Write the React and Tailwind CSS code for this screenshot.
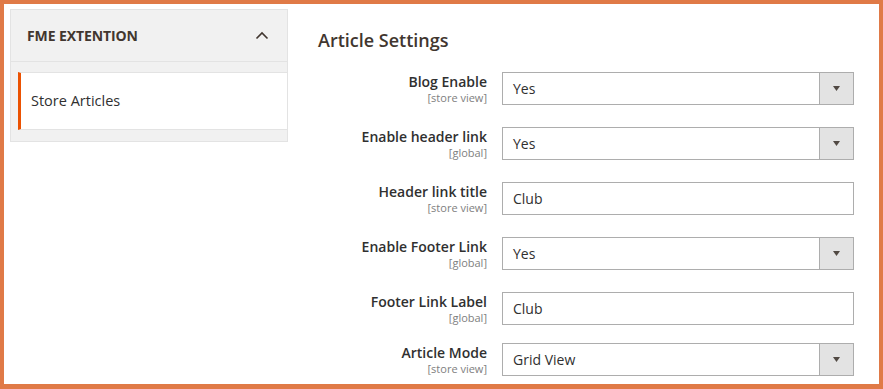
import React from 'react';

const rows = [
  { label: 'Blog Enable', scope: '[store view]', value: 'Yes', select: true },
  { label: 'Enable header link', scope: '[global]', value: 'Yes', select: true },
  { label: 'Header link title', scope: '[store view]', value: 'Club', select: false },
  { label: 'Enable Footer Link', scope: '[global]', value: 'Yes', select: true },
  { label: 'Footer Link Label', scope: '[global]', value: 'Club', select: false },
  { label: 'Article Mode', scope: '[store view]', value: 'Grid View', select: true, last: true },
];

const Field = ({ label, scope, value, select, last }) => (
  <div className={`flex items-start gap-[15px] ${last ? 'mt-[18px]' : 'mt-[22px]'} first:mt-0`}>
    <div className="w-[169px] text-right pt-[1px]">
      <div className="text-[14px] leading-[18px] font-semibold text-[#303030]">{label}</div>
      <div className="text-[11px] leading-[13px] text-[#808080]">{scope}</div>
    </div>
    <div className="w-[352px] h-[33px] border border-[#adadad] bg-white flex items-center">
      <span className="flex-1 pl-[10px] text-[14px] text-[#303030]">{value}</span>
      {select && (
        <div className="w-[34px] h-full bg-[#e3e3e3] border-l border-[#adadad] flex items-center justify-center">
          <svg width="7" height="5" viewBox="0 0 7 5">
            <polygon points="0,0 7,0 3.5,5" fill="#514943" />
          </svg>
        </div>
      )}
    </div>
  </div>
);

export default function App() {
  return (
    <div
      className="h-[389px] w-[883px] box-border border-4 border-b-[5px] border-[#e07a47] bg-white flex items-start pl-[6px] pt-[5px]"
      style={{ fontFamily: '"Open Sans", sans-serif' }}
    >
      {/* Sidebar */}
      <aside className="w-[278px] border border-[#e3e3e3] bg-[#f1f1f1]">
        <div className="h-[52px] pl-[16px] pr-[18px] flex items-center justify-between border-b border-[#e3e3e3]">
          <span className="text-[14px] font-bold text-[#41362f] tracking-[-0.1px]">FME EXTENTION</span>
          <svg width="14" height="9" viewBox="0 0 14 9">
            <polyline points="1.5,7.5 7,2 12.5,7.5" fill="none" stroke="#41362f" strokeWidth="1.6" />
          </svg>
        </div>
        <div className="pt-[10px] pb-[11px] pl-[7px]">
          <div className="h-[58px] bg-white border-y border-[#e3e3e3] border-l-[3px] border-l-[#eb5202] pl-[10px] flex items-center">
            <span className="text-[14.5px] text-[#303030]">Store Articles</span>
          </div>
        </div>
      </aside>

      {/* Settings */}
      <main className="pl-[30px] pt-[19px]">
        <h2 className="text-[18px] leading-[24px] font-semibold text-[#41362f] mb-[20px]">Article Settings</h2>
        <div>
          {rows.map((r) => (
            <Field key={r.label} {...r} />
          ))}
        </div>
      </main>
    </div>
  );
}
